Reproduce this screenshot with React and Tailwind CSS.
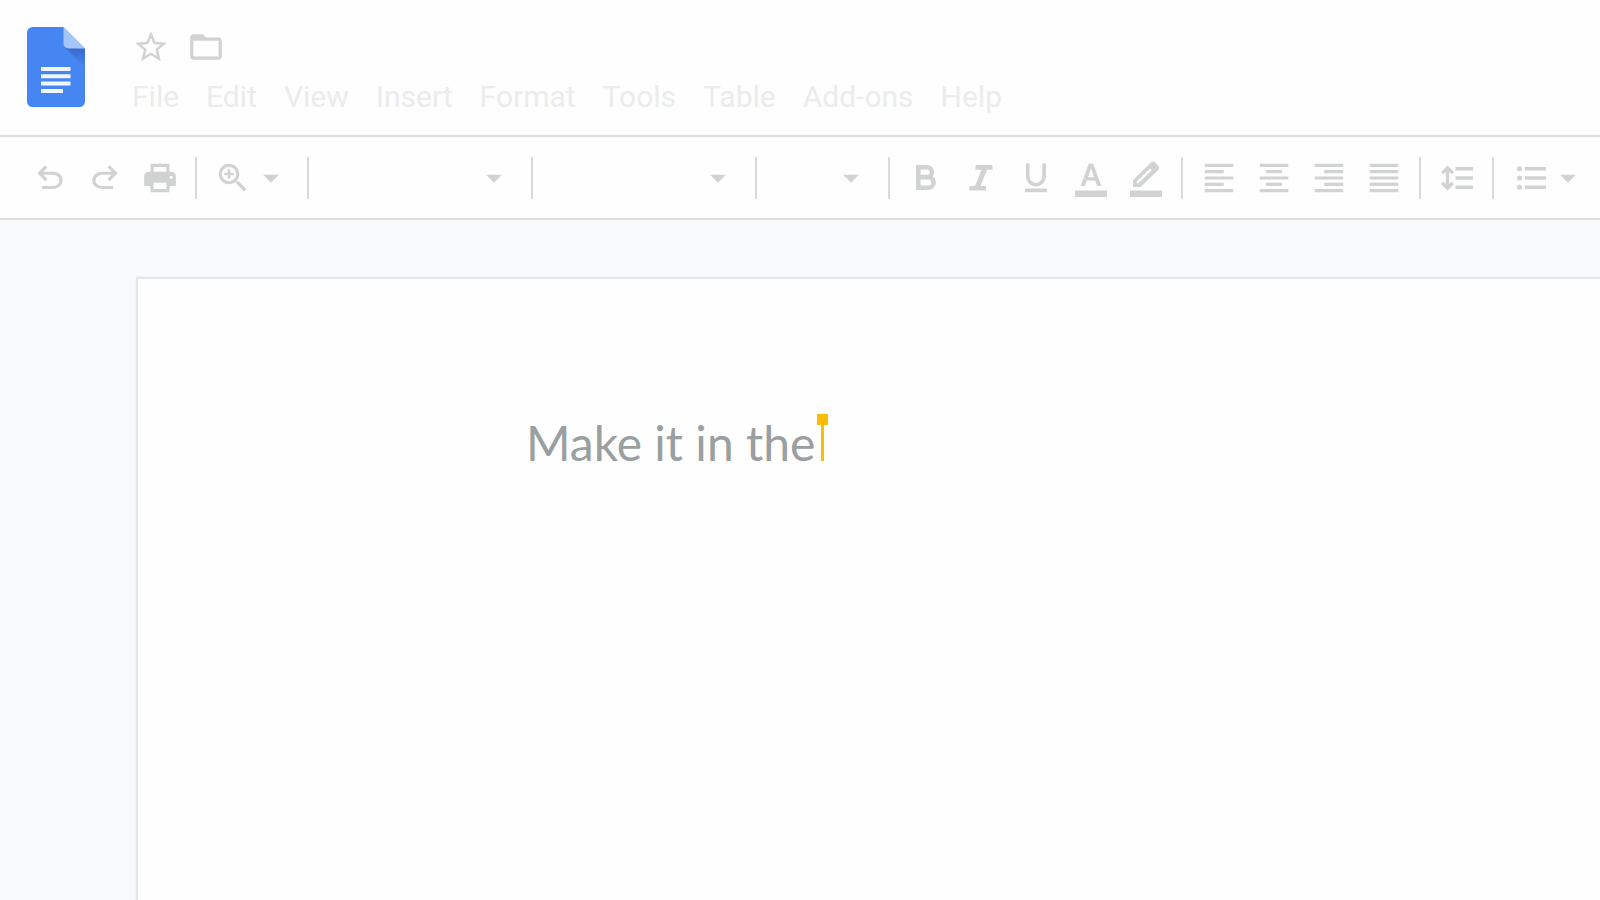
import React from 'react'

const menus = ['File', 'Edit', 'View', 'Insert', 'Format', 'Tools', 'Table', 'Add-ons', 'Help']

function Icon({ children, size = 'size-[38px]', viewBox = '0 0 24 24' }) {
  return (
    <svg viewBox={viewBox} fill="currentColor" aria-hidden="true" className={`${size} shrink-0`}>
      {children}
    </svg>
  )
}

function Caret() {
  return (
    <Icon>
      <path d="M7 10l5 5 5-5z" />
    </Icon>
  )
}

function ToolButton({ label, children }) {
  return (
    <button type="button" aria-label={label} className="flex h-11 w-[55px] shrink-0 items-center justify-center">
      {children}
    </button>
  )
}

function MenuButton({ label, children }) {
  return (
    <button type="button" aria-label={label} className="flex h-11 shrink-0 items-center px-[9px]">
      {children}
      <Caret />
    </button>
  )
}

function ToolSelect({ label, width }) {
  return (
    <div className={`relative h-11 shrink-0 ${width}`}>
      <select aria-label={label} className="h-full w-full appearance-none bg-transparent outline-none">
        <option value="" aria-label={label}></option>
      </select>
      <span className="pointer-events-none absolute inset-y-0 right-[10px] flex items-center">
        <Caret />
      </span>
    </div>
  )
}

function Separator() {
  return <div className="mx-2 h-[42px] w-[2px] shrink-0 bg-[#d8dadb]" />
}

function DocsLogo() {
  return (
    <svg viewBox="0 0 58 80" aria-hidden="true" className="h-20 w-[58px] shrink-0">
      <defs>
        <linearGradient id="fold" x1="0" y1="0" x2="0" y2="1">
          <stop offset="0" stopColor="#3769cb" />
          <stop offset="1" stopColor="#4686f2" />
        </linearGradient>
      </defs>
      <path fill="#4686f2" d="M5.500 0H36.500L58 21.500V74.500A5.500 5.500 0 0 1 52.500 80H5.500A5.500 5.500 0 0 1 0 74.500V5.500A5.500 5.500 0 0 1 5.500 0Z" />
      <path fill="url(#fold)" d="M38 20.500L58 40.500V21.500Z" />
      <path fill="#a6c5fa" d="M36.500 0L58 21.500H41.500A5 5 0 0 1 36.500 16.500Z" />
      <path fill="#f3f6fe" d="M14 40h29.500v4H14zM14 47.300h29.500v4H14zM14 54.600h29.500v4H14zM14 61.900h22v4H14z" />
    </svg>
  )
}

function Header() {
  return (
    <header className="flex h-[137px] items-start border-b-2 border-[#dcdddd] pt-[27px] pl-[27px]">
      <DocsLogo />
      <div className="ml-[47px]">
        <div className="flex h-10 items-center gap-[17px] text-[#d1d2d2]">
          <button type="button" aria-label="Star">
            <Icon>
              <path d="M22 9.240l-7.190-.620L12 2 9.190 8.630 2 9.240l5.460 4.730L5.820 21 12 17.270 18.180 21l-1.630-7.030L22 9.240zM12 15.400l-3.760 2.270 1-4.280-3.320-2.880 4.380-.380L12 6.100l1.710 4.040 4.380.380-3.320 2.880 1 4.280L12 15.400z" />
            </Icon>
          </button>
          <button type="button" aria-label="Move to folder">
            <Icon>
              <path d="M20 6h-8l-2-2H4c-1.100 0-2 .9-2 2v12c0 1.100.9 2 2 2h16c1.100 0 2-.9 2-2V8c0-1.100-.9-2-2-2zm0 12H4V8h16v10z" />
            </Icon>
          </button>
        </div>
        <nav className="mt-[10px] flex gap-[27px] text-[30px] leading-10 text-[#ebecec]">
          {menus.map((name) => (
            <button key={name} type="button">
              {name}
            </button>
          ))}
        </nav>
      </div>
    </header>
  )
}

function Toolbar() {
  return (
    <div role="toolbar" className="flex h-[83px] items-center overflow-hidden border-b-2 border-[#dcdddd] pl-[22px] text-[#d1d2d2]">
      <ToolButton label="Undo">
        <Icon viewBox="0 -960 960 960">
          <path d="M280-200v-80h284q63 0 109.500-40T720-420q0-60-46.500-100T564-560H312l104 104-56 56-200-200 200-200 56 56-104 104h252q97 0 169.500 63T800-420q0 94-72.500 157T564-200H280Z" />
        </Icon>
      </ToolButton>
      <ToolButton label="Redo">
        <Icon viewBox="0 -960 960 960">
          <path d="M396-200q-97 0-169.500-63T154-420q0-94 72.500-157T396-640h252L544-744l56-56 200 200-200 200-56-56 104-104H396q-63 0-109.500 40T240-420q0 60 46.500 100T396-280h284v80H396Z" />
        </Icon>
      </ToolButton>
      <ToolButton label="Print">
        <Icon>
          <path fillRule="evenodd" d="M6 3h12v5h1a3 3 0 0 1 3 3v6h-4v4H6v-4H2v-6a3 3 0 0 1 3-3h1zM8 5v3h8V5zM8 15v4h8v-4zM18 11.500a1 1 0 1 0 2 0a1 1 0 1 0-2 0z" />
        </Icon>
      </ToolButton>
      <Separator />
      <MenuButton label="Zoom">
        <Icon>
          <path d="M15.500 14h-.790l-.280-.270C15.410 12.590 16 11.110 16 9.500 16 5.910 13.090 3 9.500 3S3 5.910 3 9.500 5.910 16 9.500 16c1.610 0 3.090-.590 4.230-1.570l.270.280v.790l5 4.990L20.490 19l-4.990-5zm-6 0C7.010 14 5 11.990 5 9.500S7.010 5 9.500 5 14 7.010 14 9.500 11.990 14 9.500 14zM10.300 6.500H8.700v2.200H6.500v1.600h2.200v2.200h1.600v-2.200h2.200V8.700h-2.200z" />
        </Icon>
      </MenuButton>
      <Separator />
      <ToolSelect label="Styles" width="w-[206px]" />
      <Separator />
      <ToolSelect label="Font" width="w-[206px]" />
      <Separator />
      <ToolSelect label="Font size" width="w-[115px]" />
      <Separator />
      <ToolButton label="Bold">
        <Icon viewBox="0 0 38 38">
          <path fill="none" stroke="currentColor" strokeWidth="4.600" d="M11.300 8.300H20a4.900 4.900 0 0 1 0 9.800H11.300M20 18.100H21.300a5.300 5.300 0 0 1 0 10.600H11.300M11.300 6V31" />
        </Icon>
      </ToolButton>
      <ToolButton label="Italic">
        <Icon viewBox="0 0 38 38">
          <path d="M13.500 6H30.500v4.700H25L18.500 27H24v4.500H7.500V27H13L19.500 10.700H13.500z" />
        </Icon>
      </ToolButton>
      <ToolButton label="Underline">
        <Icon viewBox="0 0 38 38">
          <path fill="none" stroke="currentColor" strokeWidth="3.600" d="M10.700 4.500V17.500a8.200 8.200 0 0 0 16.400 0V4.500" />
          <path d="M8 29.500H30v3.700H8z" />
        </Icon>
      </ToolButton>
      <ToolButton label="Text color">
        <Icon viewBox="0 0 38 38">
          <path fillRule="evenodd" d="M16.800 4.500h4.400L29.300 27H25.200L23.200 21.500H14.800L12.800 27H8.700zM16 18.200H22L19 9.500z" />
          <path d="M3 31.500H35v6.500H3z" />
        </Icon>
      </ToolButton>
      <ToolButton label="Highlight color">
        <Icon viewBox="0 0 38 38">
          <path fillRule="evenodd" d="M6 21.300L23.600 3.800a3.400 3.400 0 0 1 4.800 0L31 6.400a3.400 3.400 0 0 1 0 4.800L13.500 28H6zM9.700 22.500v1.800h1.800L24.800 11.300l-1.900-1.900z" />
          <path d="M3 31.500H35v6.500H3z" />
        </Icon>
      </ToolButton>
      <Separator />
      <ToolButton label="Align left">
        <Icon>
          <path d="M15 15H3v2h12v-2zm0-8H3v2h12V7zM3 13h18v-2H3v2zm0 8h18v-2H3v2zM3 3v2h18V3H3z" />
        </Icon>
      </ToolButton>
      <ToolButton label="Align center">
        <Icon>
          <path d="M7 15v2h10v-2H7zm-4 6h18v-2H3v2zm0-8h18v-2H3v2zm4-6v2h10V7H7zM3 3v2h18V3H3z" />
        </Icon>
      </ToolButton>
      <ToolButton label="Align right">
        <Icon>
          <path d="M3 21h18v-2H3v2zm6-4h12v-2H9v2zm-6-4h18v-2H3v2zm6-4h12V7H9v2zM3 3v2h18V3H3z" />
        </Icon>
      </ToolButton>
      <ToolButton label="Justify">
        <Icon>
          <path d="M3 21h18v-2H3v2zm0-4h18v-2H3v2zm0-4h18v-2H3v2zm0-4h18V7H3v2zm0-6v2h18V3H3z" />
        </Icon>
      </ToolButton>
      <Separator />
      <ToolButton label="Line spacing">
        <Icon viewBox="0 0 38 38">
          <path d="M9.500 6.500L16 13l-2.300 2.300-2.500-2.400V25.100l2.500-2.400L16 25l-6.500 6.500L3 25l2.300-2.300 2.500 2.400V12.900l-2.500 2.400L3 13z" />
          <path d="M17.500 8H35v3.400H17.500zM17.500 17.300H35v3.400H17.500zM17.500 26.600H35V30H17.500z" />
        </Icon>
      </ToolButton>
      <Separator />
      <MenuButton label="Bulleted list">
        <Icon viewBox="0 0 38 38">
          <path d="M14 8H35v3.400H14zM14 17.300H35v3.400H14zM14 26.600H35V30H14z" />
          <circle cx="8.500" cy="9.700" r="2.500" />
          <circle cx="8.500" cy="19" r="2.500" />
          <circle cx="8.500" cy="28.300" r="2.500" />
        </Icon>
      </MenuButton>
    </div>
  )
}

export default function App() {
  return (
    <div className="flex min-h-screen flex-col overflow-hidden bg-[#fefefe] font-['Roboto',sans-serif]">
      <Header />
      <Toolbar />
      <main className="flex flex-1 bg-[#f8f9fb] pt-[57px] pl-[136px]">
        <article className="flex-1 border-t-2 border-l-2 border-[#e4e5e6] bg-[#fefefe] pt-[135px] pl-[388px] shadow-[0_0_2px_rgba(0,0,0,0.06)]">
          <div className="flex items-start gap-[2px]">
            <p className="pt-[5px] font-['Lato',sans-serif] text-[48px] leading-12 text-[#9a9fa1]">Make it in the</p>
            <span className="flex flex-col items-center">
              <span className="size-[11px] bg-[#fbbc05]" />
              <span className="h-9 w-[3px] bg-[#fbbc05]" />
            </span>
          </div>
        </article>
      </main>
    </div>
  )
}
